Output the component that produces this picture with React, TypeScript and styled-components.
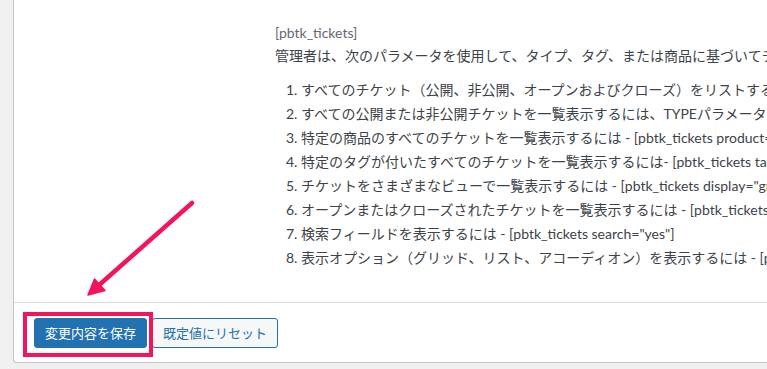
import React from "react";
import styled, { createGlobalStyle } from "styled-components";

const Global = createGlobalStyle`
  html, body { margin: 0; padding: 0; background: #f0f0f1; overflow: hidden; }
  body { font-family: Lato, "Noto Sans CJK JP", sans-serif; font-size: 13px; color: #3c434a; }
`;

const Page = styled.div`
  position: relative;
  width: 767px;
  height: 369px;
  padding-left: 13px;
  box-sizing: border-box;
`;

const Card = styled.div`
  width: 1100px;
  background: #fff;
  border-left: 1px solid #c3c4c7;
  border-bottom: 1px solid #c3c4c7;
  border-bottom-left-radius: 3px;
  box-sizing: border-box;
`;

const Body = styled.div`
  display: grid;
  grid-template-columns: 261px 1fr;
  padding: 24px 0 35px;
  border-bottom: 1px solid #dcdcde;
`;

const Content = styled.div`
  white-space: nowrap;
  font-size: 14px;
`;

const Code = styled.div`
  color: #646970;
  line-height: 18px;
  height: 18px;
`;

const Para = styled.p`
  margin: 4px 0 0;
  line-height: 20px;
`;

const List = styled.ol`
  margin: 15px 0 0 26px;
  padding: 0;
`;

const Item = styled.li`
  line-height: 18px;
  margin-bottom: 6px;
  &:last-child { margin-bottom: 0; }
`;

const Footer = styled.div`
  position: relative;
  display: flex;
  gap: 5px;
  padding: 15px 20px 14px;
`;

const Button = styled.button<{ $primary?: boolean }>`
  font-family: "Noto Sans CJK JP", sans-serif;
  font-size: 13px;
  height: 30px;
  padding: 0 10px;
  border-radius: 3px;
  border: 1px solid #2271b1;
  background: ${(p) => (p.$primary ? "#2271b1" : "#f6f7f7")};
  color: ${(p) => (p.$primary ? "#fff" : "#2271b1")};
  line-height: 28px;
  cursor: pointer;
`;

const Highlight = styled.div`
  position: absolute;
  left: 9px;
  top: 9px;
  width: 130px;
  height: 45px;
  border: 4px solid #f3155a;
  box-sizing: border-box;
  pointer-events: none;
`;

const Arrow = styled.svg`
  position: absolute;
  left: 80px;
  top: 195px;
`;

const items = [
  "すべてのチケット（公開、非公開、オープンおよびクローズ）をリストするには - [pbtk_tickets]",
  "すべての公開または非公開チケットを一覧表示するには、TYPEパラメータを使用します - [pbtk_tickets type=\"public\"]",
  "特定の商品のすべてのチケットを一覧表示するには - [pbtk_tickets product=\"product_id\"]",
  "特定のタグが付いたすべてのチケットを一覧表示するには- [pbtk_tickets tag=\"tag_name\"]",
  "チケットをさまざまなビューで一覧表示するには - [pbtk_tickets display=\"grid\"]",
  "オープンまたはクローズされたチケットを一覧表示するには - [pbtk_tickets status=\"open\"]",
  "検索フィールドを表示するには - [pbtk_tickets search=\"yes\"]",
  "表示オプション（グリッド、リスト、アコーディオン）を表示するには - [pbtk_tickets options=\"yes\"]",
];

export default function App() {
  return (
    <>
      <Global />
      <Page>
        <Card>
          <Body>
            <div />
            <Content>
              <Code>[pbtk_tickets]</Code>
              <Para>管理者は、次のパラメータを使用して、タイプ、タグ、または商品に基づいてチケットを一覧表示できます。</Para>
              <List>
                {items.map((t) => (
                  <Item key={t}>{t}</Item>
                ))}
              </List>
            </Content>
          </Body>
          <Footer>
            <Button $primary>変更内容を保存</Button>
            <Button>既定値にリセット</Button>
            <Highlight />
          </Footer>
        </Card>
        <Arrow width="120" height="110" viewBox="0 0 120 110">
          <line x1="112" y1="8" x2="18" y2="91" stroke="#f3155a" strokeWidth="4.5" strokeLinecap="round" />
          <polygon points="8,100 14.5,84 25,95.5" fill="#f3155a" stroke="#f3155a" strokeWidth="1.5" strokeLinejoin="round" />
        </Arrow>
      </Page>
    </>
  );
}
